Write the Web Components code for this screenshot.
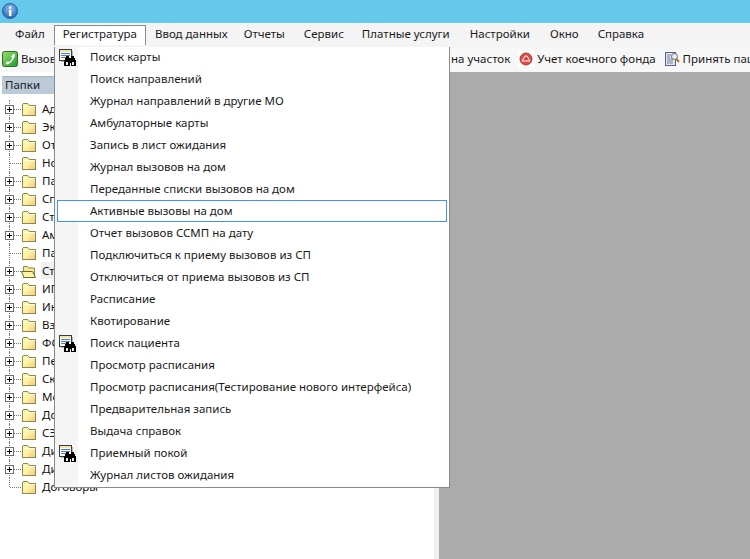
<!DOCTYPE html>
<html lang="ru">
<head>
<meta charset="utf-8">
<title>Регистратура</title>
<style>
    html, body { margin: 0; padding: 0; height: 100%; overflow: hidden; }
    body { font: 11.5px "Noto Sans", "Liberation Sans", sans-serif; color: #111; background: #fff; }
</style>
</head>
<body>
<template id="binoculars">
    <svg width="18" height="18" viewBox="0 0 18 18" shape-rendering="crispEdges">
        <rect x="0.5" y="0.5" width="12" height="11" fill="#fffde8" stroke="#3a3a4a"/>
        <rect x="1" y="1" width="11" height="2" fill="#f3e6a0"/>
        <rect x="13" y="2" width="1" height="11" fill="#b5b5b5"/>
        <rect x="2" y="12" width="5" height="1" fill="#b5b5b5"/>
        <path d="M2 4h9v1H2zM2 6h9v1H2zM2 8h6v1H2z" fill="#4a78dc"/>
        <path d="M7 7h3v2h2V7h3v2h1v2h1v6h-5v-3h-1v3H5v-6h1V9h1z" fill="#000"/>
        <rect x="7" y="13" width="2" height="3" fill="#e8e8e8"/>
        <rect x="13" y="13" width="2" height="3" fill="#e8e8e8"/>
    </svg>
</template>

<script>
    // Small helper so that every element gets its shadow root the same way
    class BaseElement extends HTMLElement {
        constructor(html) {
            super();
            this.attachShadow({ mode: 'open' });
            this.shadowRoot.innerHTML = html;
        }
    }

    class TitleBar extends BaseElement {
        constructor() {
            super(`
                <style>
                    :host { display: flex; align-items: center; height: 23px; background: #65c9eb; padding-left: 2px; }
                    svg { display: block; margin-top: -1px; }
                </style>
                <svg width="16" height="16" viewBox="0 0 16 16">
                    <defs><radialGradient id="g" cx="50%" cy="35%" r="65%"><stop offset="0" stop-color="#8fc0f0"/><stop offset="1" stop-color="#2467b8"/></radialGradient></defs>
                    <circle cx="8" cy="8" r="7.5" fill="url(#g)" stroke="#2c5f9e"/>
                    <rect x="7" y="7" width="2.4" height="6" fill="#fff"/>
                    <rect x="7" y="3.4" width="2.4" height="2.2" fill="#fff"/>
                </svg>`);
        }
    }

    class MenuBar extends BaseElement {
        constructor() {
            super(`
                <style>
                    :host { display: flex; height: 24px; box-sizing: border-box; padding: 2px 0 0 6px; background: #f4f4f4; position: relative; z-index: 3; }
                </style>
                <slot></slot>`);
        }
    }

    class MenuTitle extends BaseElement {
        constructor() {
            super(`
                <style>
                    :host { display: block; box-sizing: border-box; height: 20px; line-height: 16px; padding: 0 8px; white-space: nowrap; color: #1a1a1a; border: 1px solid transparent; border-bottom: 0; }
                    :host([active]) { background: #fff; border-color: #8a8a8a; }
                </style>
                <slot></slot>`);
        }
    }

    class ToolBar extends BaseElement {
        constructor() {
            super(`
                <style>
                    :host { display: flex; height: 25px; box-sizing: border-box; align-items: center; padding: 0 0 2px 2px; background: #f7f7f7; overflow: hidden; white-space: nowrap; }
                </style>
                <slot></slot>`);
        }
    }

    class ToolButton extends BaseElement {
        constructor() {
            super(`
                <style>
                    :host { display: flex; flex: none; align-items: center; gap: 3px; margin-right: 8px; color: #1a1a1a; }
                    ::slotted(svg) { display: block; flex: none; }
                </style>
                <slot name="icon"></slot><slot></slot>`);
        }
    }

    class TreePanel extends BaseElement {
        constructor() {
            super(`
                <style>
                    :host { display: block; width: 434px; flex: none; background: #fff; overflow: hidden; }
                    header { margin: 4px 0 6px 2px; height: 18px; line-height: 16px; padding-left: 3px; background: #bccad8; color: #1a1a1a; border-top: 1px solid #a8b4c0; box-sizing: border-box; }
                </style>
                <header>Папки</header>
                <slot></slot>`);
        }
    }

    class TreeRow extends BaseElement {
        constructor() {
            super(`
                <style>
                    :host { display: flex; align-items: center; height: 18px; padding-left: 5px; white-space: nowrap; }
                    .gutter { position: relative; width: 16px; height: 18px; flex: none; }
                    .vline { position: absolute; left: 4px; top: 0; bottom: 0; border-left: 1px dotted #777; }
                    :host([last]) .vline { bottom: 9px; }
                    .hline { position: absolute; left: 5px; right: 0; top: 9px; border-top: 1px dotted #777; }
                    .box { position: absolute; left: 0; top: 5px; width: 9px; height: 9px; box-sizing: border-box; border: 1px solid #6f6f6f; background: #fff; display: none; }
                    .box::before { content: ''; position: absolute; left: 1px; top: 3px; width: 5px; height: 1px; background: #000; }
                    .box::after { content: ''; position: absolute; left: 3px; top: 1px; width: 1px; height: 5px; background: #000; }
                    :host([plus]) .box { display: block; }
                    svg { display: block; flex: none; }
                    .open { display: none; }
                    :host([open]) .open { display: block; }
                    :host([open]) .closed { display: none; }
                    .label { margin: -2px 0 0 4px; padding: 0 1px; line-height: 17px; color: #111; }
                    :host([open]) .label { background: #f0f0f0; }
                </style>
                <div class="gutter"><i class="vline"></i><i class="hline"></i><i class="box"></i></div>
                <svg class="closed" width="16" height="15" viewBox="0 0 16 15" shape-rendering="crispEdges">
                    <defs><linearGradient id="f" x1="0" y1="0" x2="1" y2="1"><stop offset="0.45" stop-color="#fff4a6"/><stop offset="1" stop-color="#f0c878"/></linearGradient></defs>
                    <path d="M1.5 3.5V2.5L2.500 1.500H6.500L8.500 3.500H14.500V13.500H1.500Z" fill="url(#f)" stroke="#8c8a50"/>
                    <path d="M2 4.500H14" stroke="#fffde0"/>
                </svg>
                <svg class="open" width="16" height="15" viewBox="0 0 16 15">
                    <path d="M2.500 13.500V2.500H6.500L8 4H13.500V13.500Z" fill="#f7e98e" stroke="#8c8a50"/>
                    <path d="M0.500 7.500H11.500L14.500 13.500H3Z" fill="#fff4a6" stroke="#6a6838"/>
                </svg>
                <span class="label"><slot></slot></span>`);
        }
    }

    class PopupMenu extends BaseElement {
        constructor() {
            super(`
                <style>
                    :host { display: block; position: absolute; left: 54px; top: 44px; width: 396px; height: 444px; box-sizing: border-box; padding: 1px 2px 1px 2px; background: linear-gradient(90deg, #f5f5f5 23px, #fff 23px); border: 1px solid #8a8a8a; z-index: 2; }
                </style>
                <slot></slot>`);
        }
    }

    class PopupItem extends BaseElement {
        constructor() {
            super(`
                <style>
                    :host { display: block; position: relative; box-sizing: border-box; height: 22px; line-height: 20px; padding-left: 32px; border: 1px solid transparent; white-space: nowrap; color: #1a1a1a; }
                    :host([active]) { border-color: #3d97e8; background: #fff; }
                    .icon { display: none; position: absolute; left: 1px; top: 2px; height: 18px; }
                    :host([finder]) .icon { display: block; }
                    svg { display: block; }
                </style>
                <span class="icon"></span><slot></slot>`);
            this.shadowRoot.querySelector('.icon').appendChild(document.getElementById('binoculars').content.cloneNode(true));
        }
    }

    class WorkArea extends BaseElement {
        constructor() {
            super(`
                <style>
                    :host { display: flex; height: 487px; }
                    .splitter { width: 5px; flex: none; background: #f0f0f0; }
                    .desk { flex: 1; background: #ababab; }
                </style>
                <slot></slot><div class="splitter"></div><div class="desk"></div>`);
        }
    }

    customElements.define('title-bar', TitleBar);
    customElements.define('menu-bar', MenuBar);
    customElements.define('menu-title', MenuTitle);
    customElements.define('tool-bar', ToolBar);
    customElements.define('tool-button', ToolButton);
    customElements.define('tree-panel', TreePanel);
    customElements.define('tree-row', TreeRow);
    customElements.define('popup-menu', PopupMenu);
    customElements.define('popup-item', PopupItem);
    customElements.define('work-area', WorkArea);
</script>

<title-bar></title-bar>
<menu-bar>
    <menu-title>Файл</menu-title>
    <menu-title active>Регистратура</menu-title>
    <menu-title>Ввод данных</menu-title>
    <menu-title style="margin-left:-2px">Отчеты</menu-title>
    <menu-title style="margin-left:1px">Сервис</menu-title>
    <menu-title>Платные услуги</menu-title>
    <menu-title style="margin-left:2px">Настройки</menu-title>
    <menu-title style="margin-left:2px">Окно</menu-title>
    <menu-title style="margin-left:1px">Справка</menu-title>
</menu-bar>
<tool-bar>
    <tool-button style="width:449px;margin-right:0">
        <svg slot="icon" width="16" height="16" viewBox="0 0 16 16">
            <defs><linearGradient id="gb" x1="0" y1="0" x2="1" y2="1"><stop offset="0" stop-color="#9be06a"/><stop offset="1" stop-color="#1f9a30"/></linearGradient></defs>
            <rect x="0.500" y="0.500" width="15" height="15" rx="2" fill="url(#gb)" stroke="#2a6b2a"/>
            <path d="M12 2.500c1 1 1.200 2 .5 3.500-1 2.500-3.500 5.500-6 7-1 .6-2 .4-3-.6l2-2.200 1.500.8c1.500-1 2.500-2.400 3.200-4L9 5.500Z" fill="#fff"/>
        </svg>
        Вызовы на дом
    </tool-button>
    <tool-button>на участок</tool-button>
    <tool-button>
        <svg slot="icon" width="16" height="16" viewBox="0 0 16 16" style="background:#fff">
            <circle cx="8" cy="8" r="6" fill="#e04848" stroke="#c03030"/>
            <path d="M4 10l3-5h2l3 5Z" fill="none" stroke="#fff"/>
        </svg>
        Учет коечного фонда
    </tool-button>
    <tool-button>
        <svg slot="icon" width="16" height="16" viewBox="0 0 16 16">
            <rect x="1.500" y="1.500" width="10" height="13" fill="#dfe4f0" stroke="#5a6488"/>
            <path d="M3 4h4M3 6h3M3 8h6M3 10h6M3 12h6" stroke="#7a84a8"/>
            <circle cx="10.500" cy="5.500" r="3" fill="#e8f0f8" stroke="#666"/>
            <path d="M12.500 8l2.500 3" stroke="#b07820" stroke-width="2"/>
        </svg>
        Принять пациента
    </tool-button>
</tool-bar>
<work-area>
    <tree-panel>
        <tree-row plus>Адреса</tree-row>
        <tree-row plus>Экспертиза</tree-row>
        <tree-row plus>Отчеты</tree-row>
        <tree-row>Новые</tree-row>
        <tree-row plus>Пациенты</tree-row>
        <tree-row plus>Справочники</tree-row>
        <tree-row plus>Стационар</tree-row>
        <tree-row plus>Амбулатория</tree-row>
        <tree-row>Параклиника</tree-row>
        <tree-row plus open>Статистика</tree-row>
        <tree-row plus>ИПР</tree-row>
        <tree-row plus>Инвалиды</tree-row>
        <tree-row plus>Взаиморасчеты</tree-row>
        <tree-row plus>ФСС</tree-row>
        <tree-row plus>Периоды</tree-row>
        <tree-row plus>Скорая помощь</tree-row>
        <tree-row plus>Медосмотры</tree-row>
        <tree-row plus>Документы</tree-row>
        <tree-row plus>СЭМД</tree-row>
        <tree-row plus>Диагнозы</tree-row>
        <tree-row plus>Диспансеризация</tree-row>
        <tree-row last>Договоры</tree-row>
    </tree-panel>
</work-area>
<popup-menu>
    <popup-item finder>Поиск карты</popup-item>
    <popup-item>Поиск направлений</popup-item>
    <popup-item>Журнал направлений в другие МО</popup-item>
    <popup-item>Амбулаторные карты</popup-item>
    <popup-item>Запись в лист ожидания</popup-item>
    <popup-item>Журнал вызовов на дом</popup-item>
    <popup-item>Переданные списки вызовов на дом</popup-item>
    <popup-item active>Активные вызовы на дом</popup-item>
    <popup-item>Отчет вызовов ССМП на дату</popup-item>
    <popup-item>Подключиться к приему вызовов из СП</popup-item>
    <popup-item>Отключиться от приема вызовов из СП</popup-item>
    <popup-item>Расписание</popup-item>
    <popup-item>Квотирование</popup-item>
    <popup-item finder>Поиск пациента</popup-item>
    <popup-item>Просмотр расписания</popup-item>
    <popup-item>Просмотр расписания(Тестирование нового интерфейса)</popup-item>
    <popup-item>Предварительная запись</popup-item>
    <popup-item>Выдача справок</popup-item>
    <popup-item finder>Приемный покой</popup-item>
    <popup-item>Журнал листов ожидания</popup-item>
</popup-menu>
</body>
</html>
